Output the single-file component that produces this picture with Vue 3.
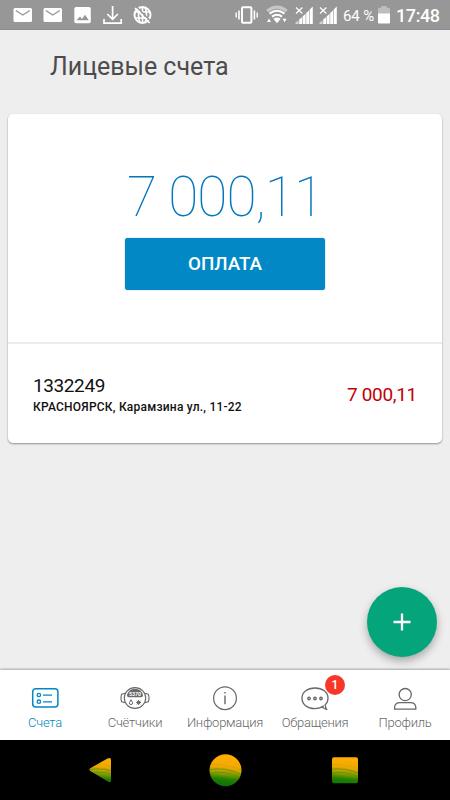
<template>
  <div class="screen">
    <!-- System status bar -->
    <div class="status-bar">
      <div class="notifications">
        <svg v-for="n in 2" :key="n" width="20" height="20" viewBox="0 0 20 20">
          <rect x="0.5" y="3" width="18.5" height="14" rx="1.5" fill="#fff" />
          <path d="M2.8 5.5 L9.8 10 L16.8 5.5" fill="none" stroke="#979797" stroke-width="1.4" />
        </svg>
        <svg width="20" height="20" viewBox="0 0 20 20">
          <rect x="1.3" y="2" width="16.5" height="16.3" rx="1.8" fill="#fff" />
          <path d="M3.5 15.2 L7 11.5 L9 14 L12 9.8 L15.8 15.2 Z" fill="#979797" />
        </svg>
        <svg width="20" height="20" viewBox="0 0 20 20" fill="none" stroke="#fff" stroke-width="1.7">
          <path d="M9.6 1 V14 M4.3 9 L9.6 14.3 L14.9 9 M1 14 V18.2 H18.2 V14" />
        </svg>
        <svg width="20" height="20" viewBox="0 0 20 20">
          <circle cx="9.5" cy="10" r="8" fill="none" stroke="#fff" stroke-width="2" />
          <path d="M2 7 H17 M2 13 H17 M7 2 Q4 10 7 18 M12 2 Q15 10 12 18 M9.5 2 V18" fill="none" stroke="#fff" stroke-width="1.7" />
          <path d="M3.8 2 L18 16.5" stroke="#979797" stroke-width="1.5" />
          <path d="M2 3 L16.6 18" stroke="#fff" stroke-width="1.7" />
        </svg>
      </div>

      <div class="indicators">
        <svg class="vibrate" width="24" height="20" viewBox="0 0 24 20" fill="none" stroke="#fff">
          <rect x="7" y="2.2" width="9.4" height="15.6" rx="1" stroke-width="2" />
          <path d="M4 5.5 V14.5 M19.4 5.5 V14.5" stroke-width="1.6" />
          <path d="M1.2 7.5 V12.5 M22.2 7.5 V12.5" stroke-width="1.4" />
        </svg>
        <svg class="wifi" width="22" height="20" viewBox="0 0 22 20" fill="none">
          <path d="M1.2 6 Q11 -1.8 20.8 6" stroke="#c6c6c6" stroke-width="3" />
          <path d="M3.5 8.6 Q11 2.8 18.5 8.6 M6 11.6 Q11 7.8 16 11.6" stroke="#fff" stroke-width="2" />
          <path d="M7.3 13.7 Q11 11.2 14.7 13.7 L11 18.3 Z M1 17 L3 13.4 L5 17 Z M16.6 13.8 H20.6 L18.6 17.2 Z" fill="#fff" />
        </svg>
        <svg v-for="n in 2" :key="n" class="signal" width="18" height="20" viewBox="0 0 18 20">
          <path d="M1 2.5 L7.4 8.5 M7.4 2.5 L1 8.5" stroke="#fff" stroke-width="1.2" />
          <path d="M0.5 19 V17.5 L3.5 15.5 V19 Z" fill="#d5d5d5" />
          <path d="M4.2 19 V14.5 L7 12.2 V19 Z M7.6 19 V11.5 L10.6 8.8 V19 Z M11.2 19 V8 L14.2 5.2 V19 Z M14.8 19 V4.2 L17.8 1.5 V19 Z" fill="#fff" />
        </svg>
        <span class="percent">64 %</span>
        <svg class="battery" width="12" height="20" viewBox="0 0 12 20">
          <path d="M3.2 1 H8.8 V2.8 H11 Q12 2.8 12 4 V9 H0 V4 Q0 2.8 1 2.8 H3.2 Z" fill="#bdbdbd" />
          <path d="M0 8.5 H12 V17.5 Q12 18.5 11 18.5 H1 Q0 18.5 0 17.5 Z" fill="#fff" />
        </svg>
        <span class="clock">17:48</span>
      </div>
    </div>

    <h1 class="title">Лицевые счета</h1>

    <main class="content">
      <div class="card">
        <div class="total">
          <div class="total-sum">{{ account.sum }}</div>
          <button class="pay">ОПЛАТА</button>
        </div>
        <div class="account">
          <div>
            <div class="number">{{ account.number }}</div>
            <div class="address">{{ account.address }}</div>
          </div>
          <div class="debt">{{ account.sum }}</div>
        </div>
      </div>
    </main>

    <button class="fab">
      <svg width="18" height="18" viewBox="0 0 18 18">
        <path d="M9 0.5 V17.5 M0.5 9 H17.5" stroke="#fff" stroke-width="2.3" />
      </svg>
    </button>

    <!-- Bottom tabs -->
    <nav class="tabs">
      <div
        v-for="tab in tabs"
        :key="tab.icon"
        class="tab"
        :class="{ active: tab.icon === activeTab }"
      >
        <div class="tab-icon">
          <svg v-if="tab.icon === 'accounts'" width="30" height="28" viewBox="0 0 30 28" fill="none" stroke="currentColor">
            <rect x="2.7" y="4.7" width="25.2" height="18.4" rx="3" stroke-width="1.5" />
            <circle cx="8.9" cy="11" r="1.7" stroke-width="1.3" />
            <circle cx="8.9" cy="17.7" r="1.7" stroke-width="1.3" />
            <path d="M13 11.2 H22 M13 17.9 H22" stroke-width="1.3" />
          </svg>
          <svg v-else-if="tab.icon === 'meters'" width="30" height="28" viewBox="0 0 30 28" fill="none" stroke="currentColor">
            <path d="M5.3 9.2 L1.7 10.2 Q0.2 14 1.7 17.8 L5.3 18.6 M24.7 9.2 L28.3 10.2 Q29.8 14 28.3 17.8 L24.7 18.6" stroke-width="1.1" />
            <ellipse cx="15" cy="14" rx="10.7" ry="10.4" stroke-width="1.1" />
            <path d="M7 11.5 Q8.5 4.8 15 4.8 Q21.5 4.8 23 11.5 Q23 13.3 21 13.3 H9 Q7 13.3 7 11.5 Z" fill="currentColor" stroke="none" />
            <text x="15" y="11.8" class="meter-digits">5370</text>
            <path d="M11 15.7 Q8.7 19 9.6 20 Q11 21.3 12.4 20 Q13.3 19 11 15.7 Z" stroke-width="1" />
            <path d="M18.6 16 V21 M16.1 18.5 H21.1 M16.8 16.7 L20.4 20.3 M20.4 16.7 L16.8 20.3" stroke-width="1" />
          </svg>
          <svg v-else-if="tab.icon === 'info'" width="30" height="28" viewBox="0 0 30 28" fill="none" stroke="currentColor">
            <circle cx="15" cy="14.2" r="11.4" stroke-width="1.2" />
            <path d="M15 11.5 V20.3 M15 8 V9.5" stroke-width="1.4" />
          </svg>
          <svg v-else-if="tab.icon === 'messages'" width="30" height="28" viewBox="0 0 30 28" fill="none" stroke="currentColor">
            <path d="M23.8 21.8 C21.3 23.8 18 24.6 14.6 24.6 C7.3 24.6 2 20.2 2 14.2 C2 8.2 7.4 4 15 4 C22.6 4 28 8.2 28 14.2 C28 17 27 19.1 25.2 20.7 Q25.3 23.5 26.6 25.4 Q24.5 25.4 22.3 22.9" stroke-width="1.3" />
            <circle v-for="x in [9, 15, 21]" :key="x" :cx="x" cy="14.5" r="1.2" stroke-width="1.4" />
          </svg>
          <svg v-else width="30" height="28" viewBox="0 0 30 28" fill="none" stroke="currentColor">
            <circle cx="15.2" cy="10.6" r="6.1" stroke-width="1.3" />
            <path d="M4.6 25.2 V23 Q5.2 18.7 10 18.7 H20.5 Q25.2 18.7 25.8 23 V25.2 Z" stroke-width="1.3" />
          </svg>
          <span v-if="tab.badge" class="badge">{{ tab.badge }}</span>
        </div>
        <span class="tab-label">{{ tab.label }}</span>
      </div>
    </nav>

    <!-- System navigation keys -->
    <div class="system-nav">
      <svg v-for="key in keys" :key="key" width="34" height="34" viewBox="0 0 34 34">
        <defs>
          <linearGradient :id="'paint-' + key" x1="0.1" y1="0" x2="0" y2="1">
            <stop offset="0.15" stop-color="#ffae00" />
            <stop offset="0.38" stop-color="#e5a400" />
            <stop offset="0.55" stop-color="#96a000" />
            <stop offset="0.72" stop-color="#228000" />
            <stop offset="1" stop-color="#006b12" />
          </linearGradient>
          <clipPath :id="'shape-' + key">
            <path v-if="key === 'back'" d="M2.3 15.2 L19.5 5.5 Q23 3.8 23 7 V27 Q23 30.5 20 28.5 L2.3 18 Q0.5 16.6 2.3 15.2 Z" />
            <circle v-else-if="key === 'home'" cx="17.5" cy="17.2" r="16" />
            <rect v-else x="4" y="4.2" width="26" height="26" rx="2" />
          </clipPath>
        </defs>
        <g :clip-path="`url(#shape-${key})`">
          <rect width="34" height="34" :fill="`url(#paint-${key})`" />
          <path d="M0 10 Q16 7 34 15 M0 14 Q16 11 34 19" fill="none" stroke="#ffbc00" stroke-opacity="0.4" />
          <path d="M0 17 Q16 13 34 22 M0 21 Q16 16 34 25" fill="none" stroke="#508c00" stroke-opacity="0.6" />
        </g>
      </svg>
    </div>
  </div>
</template>

<script setup>
import { ref } from "vue";

const account = ref({
  number: "1332249",
  address: "КРАСНОЯРСК, Карамзина ул., 11-22",
  sum: "7 000,11",
});

const activeTab = ref("accounts");

const tabs = [
  { icon: "accounts", label: "Счета" },
  { icon: "meters", label: "Счётчики" },
  { icon: "info", label: "Информация" },
  { icon: "messages", label: "Обращения", badge: 1 },
  { icon: "profile", label: "Профиль" },
];

const keys = ["back", "home", "recent"];
</script>

<style>
body {
  margin: 0;
}
</style>

<style scoped>
.screen {
  position: relative;
  display: flex;
  flex-direction: column;
  width: 450px;
  height: 800px;
  overflow: hidden;
  background: #eee;
  font-family: Roboto, "Noto Sans", sans-serif;
  color: #111;
}

button {
  border: 0;
  padding: 0;
  font-family: inherit;
}

svg {
  display: block;
  flex: none;
}

.status-bar {
  display: flex;
  justify-content: space-between;
  align-items: center;
  box-sizing: border-box;
  height: 30px;
  padding: 0 10px 0 13px;
  background: #979797;
  border-bottom: 1px solid #8c8c8c;
  color: #fff;
  white-space: nowrap;
}

.notifications {
  display: flex;
  gap: 10px;
}

.indicators {
  display: flex;
  align-items: center;
}

.wifi {
  margin-left: 7px;
}

.signal {
  margin-left: 7px;
}

.signal + .signal {
  margin-left: 6px;
}

.percent {
  width: 32px;
  margin-left: 6px;
  padding-top: 2px;
  font-size: 15px;
  letter-spacing: -0.1px;
}

.battery {
  margin-left: 3px;
}

.clock {
  width: 44px;
  margin-left: 6px;
  padding-top: 1px;
  font-size: 18px;
  font-weight: 500;
  letter-spacing: -0.4px;
}

.title {
  box-sizing: border-box;
  height: 83px;
  margin: 0;
  padding: 22px 50px 0;
  font-size: 25px;
  line-height: 30px;
  font-weight: 400;
  color: #4c4c4c;
}

.content {
  flex: 1;
  padding: 1px 8px 0;
}

.card {
  height: 329px;
  border-radius: 5px;
  background: #fff;
  box-shadow: 0 1px 2px rgba(0, 0, 0, 0.4);
}

.total {
  display: flex;
  flex-direction: column;
  align-items: center;
  box-sizing: border-box;
  height: 230px;
  padding-top: 50px;
  border-bottom: 2px solid #ececec;
}

.total-sum {
  font-size: 55px;
  line-height: 66px;
  font-weight: 100;
  letter-spacing: -1px;
  color: #0277bd;
  white-space: nowrap;
}

.pay {
  width: 200px;
  height: 52px;
  margin-top: 8px;
  border-radius: 3px;
  background: #0288c4;
  color: #fff;
  font-size: 18.8px;
  font-weight: 500;
  box-shadow: 0 0 1px #0070b0;
}

.account {
  display: flex;
  justify-content: space-between;
  align-items: center;
  box-sizing: border-box;
  height: 99px;
  padding: 2px 25px 0;
}

.number {
  padding-top: 2px;
  font-size: 19px;
  line-height: 22px;
  letter-spacing: -0.4px;
}

.address {
  margin-top: 1px;
  font-size: 12px;
  line-height: 18px;
  font-weight: 500;
  letter-spacing: 0.22px;
}

.debt {
  font-size: 19px;
  line-height: 22px;
  letter-spacing: -0.3px;
  color: #c00008;
}

/* The add button floats over the page, above the tabs */
.fab {
  position: absolute;
  right: 13px;
  bottom: 143px;
  display: flex;
  align-items: center;
  justify-content: center;
  width: 70px;
  height: 70px;
  border-radius: 50%;
  background: #04a57a;
  box-shadow: 0 4px 9px rgba(0, 0, 0, 0.3);
}

.tabs {
  position: relative;
  display: flex;
  height: 70px;
  background: #fff;
  box-shadow: 0 -1px 2px rgba(0, 0, 0, 0.3);
}

.tab {
  display: flex;
  flex: 1;
  flex-direction: column;
  align-items: center;
  color: #686868;
}

.tab.active {
  color: #0288c4;
}

.tab-icon {
  position: relative;
  margin-top: 14px;
}

.tab-label {
  margin-top: 3px;
  font-size: 13px;
  line-height: 16px;
  font-weight: 300;
  letter-spacing: -0.25px;
}

.meter-digits {
  fill: #fff;
  stroke: none;
  font-size: 5.2px;
  font-weight: 700;
  text-anchor: middle;
}

.badge {
  position: absolute;
  left: 25px;
  top: -9px;
  width: 20px;
  height: 20px;
  border-radius: 50%;
  background: #f7372a;
  color: #fff;
  font-size: 12px;
  line-height: 20px;
  font-weight: 500;
  text-align: center;
}

.system-nav {
  display: flex;
  justify-content: center;
  align-items: center;
  gap: 86px;
  height: 60px;
  background: #000;
}
</style>
